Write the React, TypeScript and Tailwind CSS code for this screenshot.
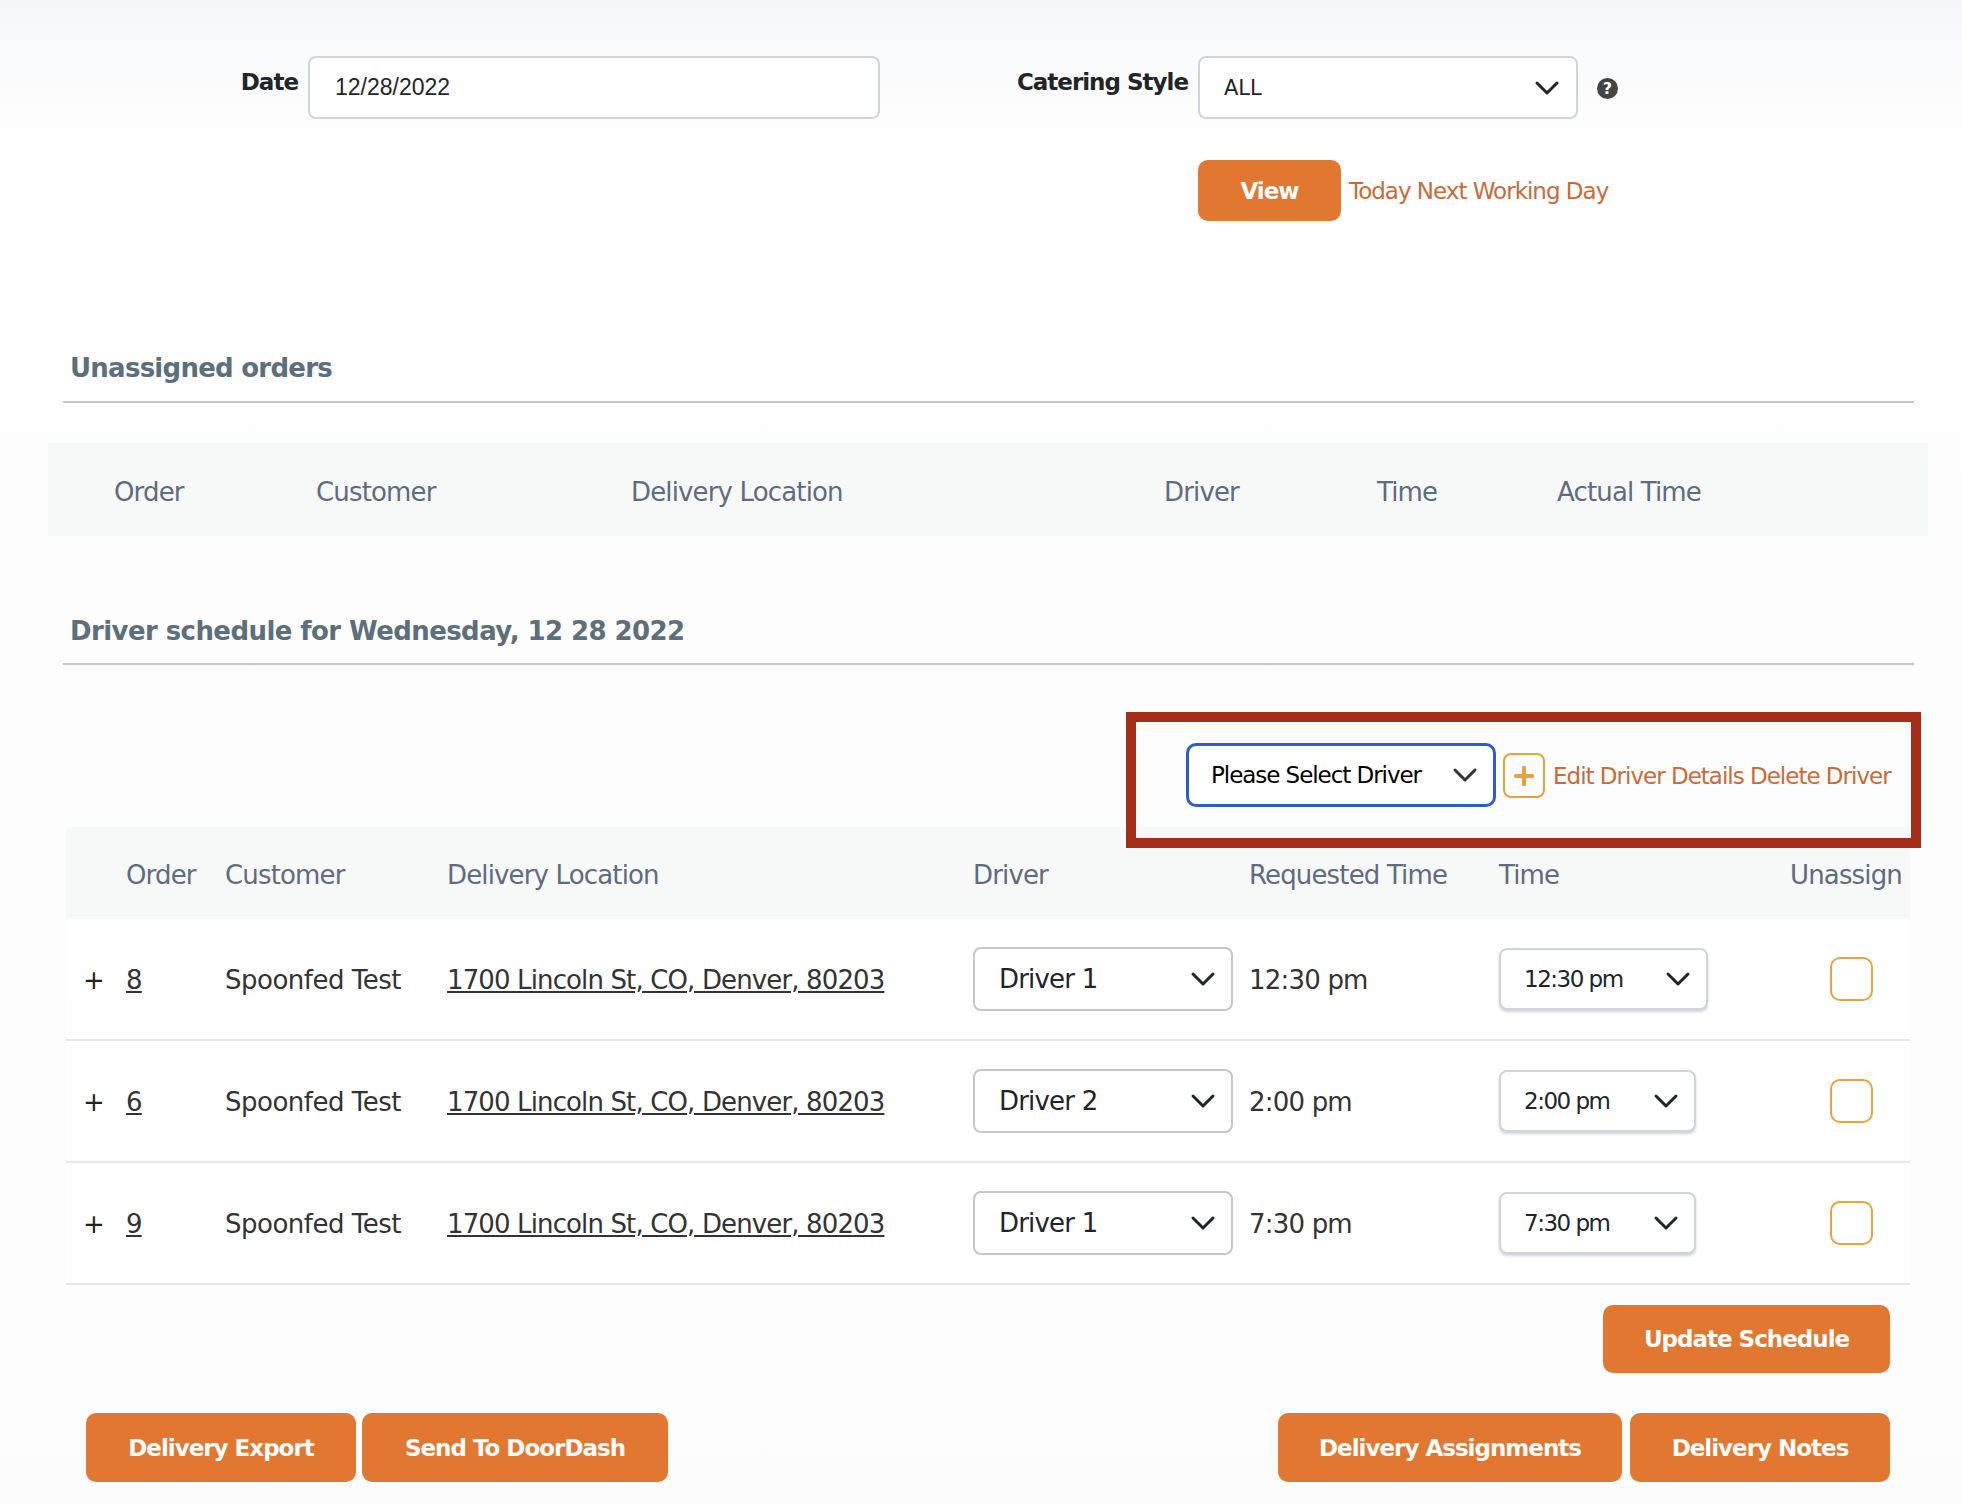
import { ChevronDown, Plus } from 'lucide-react'

const rows = [
  { id: '8', requested: '12:30 pm', driver: 'Driver 1', wide: true },
  { id: '6', requested: '2:00 pm', driver: 'Driver 2', wide: false },
  { id: '9', requested: '7:30 pm', driver: 'Driver 1', wide: false }
]

const sectionTitle = 'ml-[70px] text-[26px] leading-[30px] font-bold text-[#5c6f7b]'
const fieldLabel = 'pt-[11px] text-right text-[23px] leading-[30px] font-bold tracking-[-1px] text-[#212529]'
const linkText = 'text-[23px] tracking-[-1px] text-[#c76b3a]'
const orangeBtn = 'flex items-center justify-center rounded-[10px] bg-[#e17730] pt-[1px] text-[23px] font-bold tracking-[-1px] text-white'
const headText = 'text-[26px] tracking-[-0.85px] text-[#5f6b80]'
const unassignedCols = 'grid grid-cols-[202px_315px_533px_213px_180px_1fr]'
const scheduleCols = 'grid grid-cols-[60px_99px_222px_526px_276px_250px_291px_120px]'

export default function App () {
  return (
    <div className="min-h-[1504px] bg-[linear-gradient(#f6f7f9,#fefefe_140px,#fcfcfc)] pt-[56px] font-['DejaVu_Sans',sans-serif] text-[#333]">
      {/* Filter form */}
      <div className="flex items-start">
        <label className={`w-[298px] ${fieldLabel}`}>Date</label>
        <input
          readOnly
          value="12/28/2022"
          className="ml-[10px] h-[63px] w-[572px] rounded-lg border-2 border-[#ced4da] bg-white px-[25px] font-['Liberation_Sans',sans-serif] text-[23px] text-[#212529]"
        />
        <label className={`w-[308px] ${fieldLabel}`}>Catering Style</label>
        <div className="ml-[10px] flex h-[63px] w-[380px] items-center justify-between rounded-lg border-2 border-[#ced4da] bg-white pr-[9px] pl-[24px] text-[21px] text-[#212529]">
          <span className="pt-[2px]">ALL</span>
          <ChevronDown size={40} strokeWidth={1.8} />
        </div>
        <div className="mt-[22px] ml-[19px] flex h-[21px] w-[21px] items-center justify-center rounded-full bg-[#444] text-[16px] leading-none font-bold text-white">?</div>
      </div>

      <div className="mt-[41px] ml-[1198px] flex items-center">
        <button className={`${orangeBtn} h-[61px] w-[143px]`}>View</button>
        <a className={`ml-[8px] pt-[2px] ${linkText}`}>Today Next Working Day</a>
      </div>

      {/* Unassigned orders */}
      <h2 className={`mt-[132px] tracking-[-0.75px] ${sectionTitle}`}>Unassigned orders</h2>
      <div className="mt-[18px] mr-[48px] ml-[63px] border-t-2 border-[#c6c6c6]" />
      <div className={`mt-[40px] mr-[34px] ml-[48px] h-[93px] items-center bg-[#f7f8f8] pt-[5px] pl-[66px] ${headText} ${unassignedCols}`}>
        <span>Order</span>
        <span>Customer</span>
        <span>Delivery Location</span>
        <span>Driver</span>
        <span>Time</span>
        <span>Actual Time</span>
      </div>

      {/* Driver schedule */}
      <h2 className={`mt-[80px] tracking-[-0.58px] ${sectionTitle}`}>Driver schedule for Wednesday, 12 28 2022</h2>
      <div className="mt-[17px] mr-[48px] ml-[63px] border-t-2 border-[#c6c6c6]" />

      <div className="relative z-10 mt-[47px] -mb-[21px] flex justify-end pr-[41px]">
        <div className="flex h-[136px] w-[795px] items-start border-[10px] border-[#a52c16] pt-[21px] pl-[50px]">
          <div className="flex h-[64px] w-[310px] items-center justify-between rounded-[10px] border-[3px] border-[#2a5fc9] bg-white pr-[8px] pl-[22px] text-[23px] tracking-[-1.05px] text-black">
            <span className="pt-[1px]">Please Select Driver</span>
            <ChevronDown size={40} strokeWidth={1.8} className="text-[#333]" />
          </div>
          <div className="mt-[10px] ml-[7px] flex h-[45px] w-[42px] items-center justify-center rounded-lg border-2 border-[#e5a040] text-[#e5a040]">
            <Plus size={28} strokeWidth={3.4} />
          </div>
          <a className={`mt-[17px] ml-[8px] leading-[32px] whitespace-nowrap ${linkText}`}>Edit Driver Details Delete Driver</a>
        </div>
      </div>

      <div className="mr-[52px] ml-[66px]">
        <div className={`h-[92px] items-center bg-[#f7f8f8] pt-[4px] ${headText} ${scheduleCols}`}>
          <span />
          <span>Order</span>
          <span>Customer</span>
          <span>Delivery Location</span>
          <span>Driver</span>
          <span>Requested Time</span>
          <span>Time</span>
          <span>Unassign</span>
        </div>
        {rows.map((row) => (
          <div key={row.id} className={`h-[122px] items-center border-b-2 border-[#e6e6e6] bg-white text-[26px] tracking-[-0.8px] ${scheduleCols}`}>
            <span className="pt-[2px] pl-[17px] text-[#222]">+</span>
            <a className="pt-[2px] underline">{row.id}</a>
            <span className="pt-[2px] tracking-[-0.5px]">Spoonfed Test</span>
            <a className="pt-[2px] tracking-[-0.87px] underline">1700 Lincoln St, CO, Denver, 80203</a>
            <div className="flex h-[64px] w-[260px] items-center justify-between rounded-lg border-2 border-[#c6c6c6] bg-white pr-[8px] pl-[24px] text-[#212529]">
              {row.driver}
              <ChevronDown size={40} strokeWidth={1.8} />
            </div>
            <span className="pt-[2px]">{row.requested}</span>
            <div className={`flex h-[62px] items-center justify-between rounded-lg border-2 border-[#ced4da] bg-white pr-[8px] pl-[23px] text-[23px] tracking-[-1.5px] text-[#212529] shadow-[0_2px_3px_rgba(0,0,0,0.18)] ${row.wide ? 'w-[209px]' : 'w-[197px]'}`}>
              {row.requested}
              <ChevronDown size={40} strokeWidth={1.8} />
            </div>
            <div className="ml-[40px] h-[44px] w-[43px] rounded-[10px] border-2 border-[#e8a33d] bg-white" />
          </div>
        ))}
      </div>

      {/* Footer actions */}
      <div className="mt-[20px] flex justify-end pr-[72px]">
        <button className={`${orangeBtn} h-[68px] w-[287px]`}>Update Schedule</button>
      </div>
      <div className="mt-[40px] flex justify-between pr-[72px] pl-[86px]">
        <div className="flex gap-[6px]">
          <button className={`${orangeBtn} h-[69px] w-[270px]`}>Delivery Export</button>
          <button className={`${orangeBtn} h-[69px] w-[306px]`}>Send To DoorDash</button>
        </div>
        <div className="flex gap-[8px]">
          <button className={`${orangeBtn} h-[69px] w-[344px]`}>Delivery Assignments</button>
          <button className={`${orangeBtn} h-[69px] w-[260px]`}>Delivery Notes</button>
        </div>
      </div>
    </div>
  )
}
